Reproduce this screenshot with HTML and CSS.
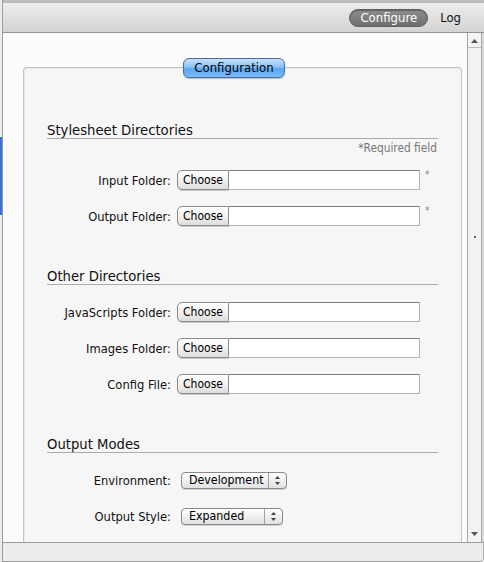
FILE: index.html
```html
<!DOCTYPE html>
<html>
<head>
<meta charset="utf-8">
<link rel="stylesheet" href="styles.css">
</head>
<body>
<div class="screen">
  <div class="desk"><div class="desk-gap"></div><div class="desk-blue"></div></div>
  <div class="window">
    <header class="toolbar">
      <span class="pill">Configure</span>
      <span class="tool">Log</span>
    </header>
    <div class="main">
      <div class="content">
        <section class="panel">
          <div class="tabrow"><span class="tab">Configuration</span></div>

          <h2 class="heading first">Stylesheet Directories</h2>
          <p class="req">*Required field</p>
          <div class="rows">
            <div class="row"><span class="label">Input Folder:</span><span class="choose">Choose</span><span class="field"></span><span class="star">*</span></div>
            <div class="row"><span class="label">Output Folder:</span><span class="choose">Choose</span><span class="field"></span><span class="star">*</span></div>
          </div>

          <h2 class="heading">Other Directories</h2>
          <div class="rows">
            <div class="row"><span class="label">JavaScripts Folder:</span><span class="choose">Choose</span><span class="field"></span></div>
            <div class="row"><span class="label">Images Folder:</span><span class="choose">Choose</span><span class="field"></span></div>
            <div class="row"><span class="label">Config File:</span><span class="choose">Choose</span><span class="field"></span></div>
          </div>

          <h2 class="heading">Output Modes</h2>
          <div class="rows">
            <div class="row"><span class="label sel">Environment:</span><span class="select env"><span class="sel-text">Development</span><span class="sel-arrows"><svg width="7" height="11" viewBox="0 0 7 11"><path d="M3.5 1 L6 4 L1 4 Z M1 7 L6 7 L3.5 10 Z" fill="#444"/></svg></span></span></div>
            <div class="row"><span class="label sel">Output Style:</span><span class="select style"><span class="sel-text">Expanded</span><span class="sel-arrows"><svg width="7" height="11" viewBox="0 0 7 11"><path d="M3.5 1 L6 4 L1 4 Z M1 7 L6 7 L3.5 10 Z" fill="#444"/></svg></span></span></div>
          </div>
        </section>
      </div>
      <div class="scrollbar">
        <div class="sb-btn top"><svg width="7" height="4" viewBox="0 0 7 4"><path d="M3.5 0 L7 4 L0 4 Z" fill="#555"/></svg></div>
        <div class="sb-track"><span class="sb-dot"></span></div>
        <div class="sb-btn bottom"><svg width="7" height="4" viewBox="0 0 7 4"><path d="M0 0 L7 0 L3.5 4 Z" fill="#555"/></svg></div>
      </div>
      <div class="edge"></div>
    </div>
    <footer class="status"></footer>
  </div>
</div>
</body>
</html>
```

FILE: styles.css
```css
* { box-sizing: border-box; }
html, body { margin: 0; padding: 0; }
body {
  width: 484px;
  height: 562px;
  overflow: hidden;
  background: #fff;
  color: #111;
  font-family: "DejaVu Sans Condensed", "DejaVu Sans", sans-serif;
}
.screen { display: flex; height: 562px; }
.desk { width: 2px; display: flex; flex-direction: column; background: #ececec; }
.desk-gap { height: 137px; }
.desk-blue { height: 78px; background: #3b70d9; }

.window {
  flex: 1;
  display: flex;
  flex-direction: column;
  border-left: 1px solid #9c9c9c;
  min-width: 0;
}

.toolbar {
  height: 33px;
  flex: none;
  border-top: 3px solid #bcbcbc;
  border-bottom: 1px solid #969696;
  background: linear-gradient(#ededed, #d3d3d3);
  display: flex;
  align-items: center;
  justify-content: flex-end;
  gap: 12px;
  padding-right: 23px;
  font-size: 13px;
}
.pill {
  height: 18px;
  line-height: 16px;
  padding: 0 10px;
  border: 1px solid #5f5f5f;
  border-radius: 9px;
  background: linear-gradient(#8e8e8e, #6d6d6d);
  color: #fff;
  box-shadow: inset 0 1px 1px rgba(0,0,0,0.3);
}
.tool { color: #111; line-height: 16px; }

.main { flex: 1; display: flex; min-height: 0; }
.content {
  flex: 1;
  display: flex;
  flex-direction: column;
  padding: 34px 5px 0 20px;
  background: #fbfbfb;
}
.panel {
  flex: 1;
  border: 1px solid #c3c3c3;
  border-bottom: 0;
  border-radius: 4px 4px 0 0;
  background: #f6f6f6;
  padding: 0 23px;
  box-shadow: inset 1px 1px 0 #e9e9e9;
}
.tabrow {
  display: flex;
  justify-content: center;
  margin: -10px -23px 0;
  padding-right: 17px;
}
.tab {
  height: 20px;
  width: 102px;
  line-height: 18px;
  text-align: center;
  font-size: 13px;
  color: #000;
  border: 1px solid #4b6f99;
  border-radius: 6px;
  background: linear-gradient(#c7e1fb 0%, #8cc2f7 45%, #5aa5f1 55%, #7cbcf9 100%);
  box-shadow: 0 1px 1px rgba(0,0,0,0.25);
}

.heading {
  margin: 41px 0 0;
  font-size: 14.7px;
  line-height: 17px;
  font-weight: normal;
  color: #111;
  border-bottom: 1px solid #acacac;
}
.heading.first { margin-top: 43px; }
.req {
  margin: 2px 0 0;
  text-align: right;
  font-size: 11.8px;
  line-height: 14px;
  color: #777;
  padding-right: 1px;
}
.rows {
  display: flex;
  flex-direction: column;
  gap: 16px;
  margin-top: 17px;
}
.req + .rows { margin-top: 15px; }
.row {
  display: flex;
  align-items: center;
  height: 20px;
  font-size: 12px;
}
.label {
  width: 124px;
  text-align: right;
  margin-right: 6px;
  font-size: 12.8px;
  color: #111;
  white-space: nowrap;
}
.label.sel { margin-right: 10px; }
.choose {
  width: 52px;
  height: 20px;
  line-height: 18px;
  text-align: center;
  border: 1px solid #8b8b8b;
  border-radius: 5px 0 0 5px;
  background: linear-gradient(#ffffff, #f2f2f2 50%, #dcdcdc);
  box-shadow: 0 1px 0 #c8c8c8;
  color: #000;
}
.field {
  width: 191px;
  height: 20px;
  background: #fff;
  border: 1px solid #b5b5b5;
  border-top-color: #7d7d7d;
  border-left: 0;
}
.star {
  align-self: flex-start;
  margin-left: 5px;
  font-size: 10px;
  line-height: 10px;
  color: #888;
}

.select {
  display: flex;
  height: 17px;
  border: 1px solid #8a8a8a;
  border-radius: 4px;
  background: linear-gradient(#ffffff, #f0f0f0 50%, #e2e2e2);
  box-shadow: 0 1px 0 #d0d0d0;
}
.select.env { width: 106px; }
.select.style { width: 102px; }
.sel-text {
  flex: 1;
  padding-left: 7px;
  line-height: 15px;
  font-size: 12.3px;
  color: #000;
  white-space: nowrap;
}
.sel-arrows {
  width: 18px;
  flex: none;
  border-left: 1px solid #a0a0a0;
  display: flex;
  align-items: center;
  justify-content: center;
}

.scrollbar {
  width: 15px;
  flex: none;
  border-left: 1px solid #a8a8a8;
  border-right: 1px solid #a8a8a8;
  background: #f3f3f3;
  display: flex;
  flex-direction: column;
}
.sb-btn {
  height: 15px;
  display: flex;
  justify-content: center;
  align-items: center;
}
.sb-btn.top { border-bottom: 1px solid #bdbdbd; align-items: flex-start; padding-top: 6px; }
.sb-btn.bottom { align-items: flex-end; padding-bottom: 6px; height: 18px; }
.sb-track {
  flex: 1;
  display: flex;
  justify-content: center;
  align-items: flex-start;
  padding-top: 188px;
}
.sb-dot { width: 2px; height: 2px; background: #666; }
.edge { width: 2px; flex: none; background: #dadada; }

.status {
  height: 20px;
  flex: none;
  border-top: 1px solid #9c9c9c;
  border-bottom: 1px solid #9f9f9f;
  border-right: 1px solid #b0b0b0;
  border-bottom-right-radius: 4px;
  background: #ececec;
}
```
